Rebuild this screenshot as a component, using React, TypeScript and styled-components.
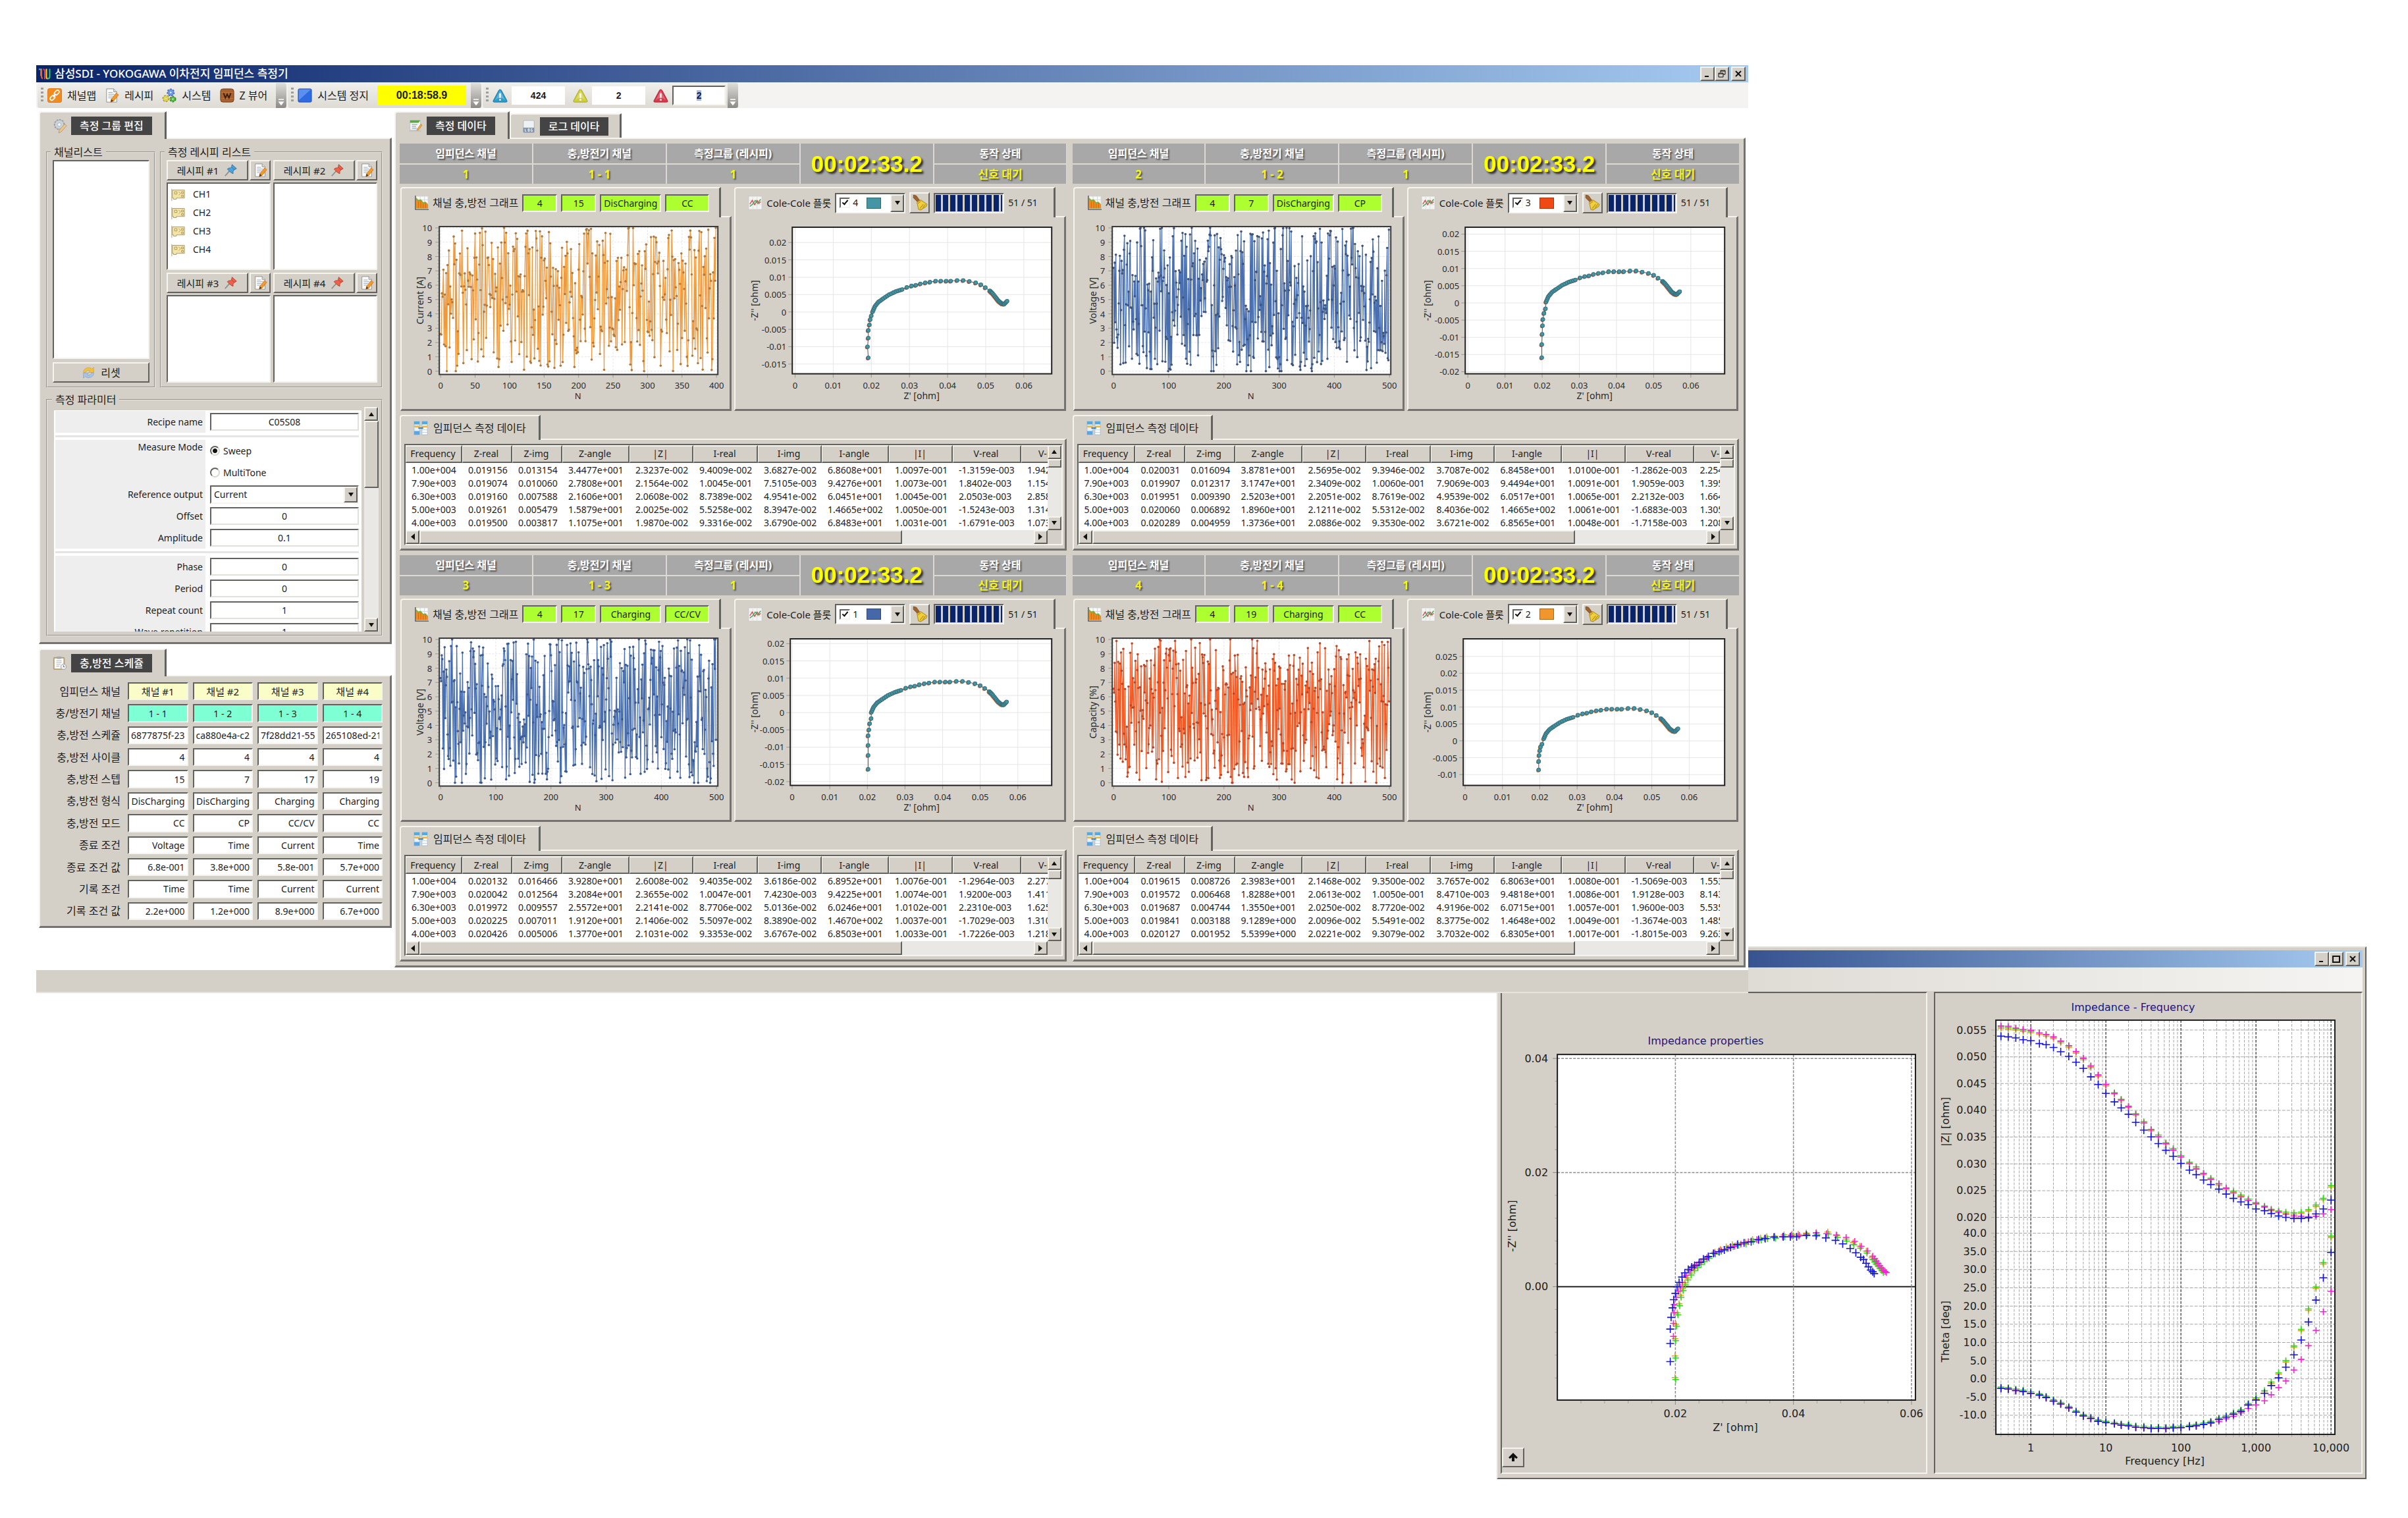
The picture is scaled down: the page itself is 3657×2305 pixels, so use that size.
import React from 'react';
import styled, { createGlobalStyle, css } from 'styled-components';

const FACE = '#d4d0c8';
const LIGHT = '#f6f4ee';
const SHADE = '#62625f';
const UI = '"Noto Sans", "Noto Sans CJK KR", sans-serif';
const WIDE = '"DejaVu Sans", sans-serif';
const BOLD = '"Liberation Sans", Arial, sans-serif';

const Global = createGlobalStyle`
  *, *::before, *::after { box-sizing: border-box; }
  body { margin: 0; background: #fff; color: #1c1c1c; font: 14px/20px ${UI}; }
  button, input, select { font: inherit; color: inherit; margin: 0; padding: 0; border-radius: 0; }
`;

const raised = css`
  background: ${FACE};
  border: 2px solid;
  border-color: ${LIGHT} ${SHADE} ${SHADE} ${LIGHT};
`;
const sunken = css`
  border: 2px solid;
  border-color: ${SHADE} ${LIGHT} ${LIGHT} ${SHADE};
`;

/* ---------- windows ---------- */

const Desktop = styled.main`
  position: relative;
  min-height: 100vh;
  min-width: 3000px;
  background: #fff;
`;
const MainWindow = styled.section`
  position: absolute;
  z-index: 2;
  top: 99px;
  left: 55px;
  right: 1002px;
  background: #fff;
`;
const ViewerWindow = styled.section`
  position: absolute;
  z-index: 1;
  top: 1437px;
  left: 2273px;
  right: 63px;
  padding: 4px;
  background: ${FACE};
  border: 2px solid;
  border-color: #e4e1da ${SHADE} ${SHADE} #e4e1da;
`;
const TitleBar = styled.header`
  display: flex;
  align-items: center;
  height: 26px;
  padding: 0 4px 0 3px;
  background: linear-gradient(90deg, #0a246a, #a6caf0);
  color: #fff;
`;
const ViewerBar = styled(TitleBar)`
  justify-content: flex-end;
`;
const Title = styled.h1`
  flex: 1;
  margin: 0 0 0 5px;
  font-size: 17px;
  font-weight: 500;
  line-height: 24px;
`;
const CaptionButton = styled.button<{ $apart?: boolean }>`
  ${raised}
  display: grid;
  place-items: center;
  width: 22px;
  height: 22px;
  margin-left: ${p => (p.$apart ? 3 : 0)}px;
  svg { width: 14px; height: 14px; }
`;
const MenuBand = styled.div`
  height: 36px;
  background: linear-gradient(90deg, #d6d2ca, #f5f4f2);
`;
const StatusBar = styled.footer`
  height: 35px;
  margin-top: 4px;
  background: ${FACE};
  border-bottom: 2px solid #e6e3dc;
`;

/* ---------- toolbar ---------- */

const Toolbar = styled.div`
  display: flex;
  gap: 2px;
  height: 39px;
  padding: 1px 2px 0;
  background: #f4f3f1;
`;
const Strip = styled.div`
  display: flex;
  align-items: center;
  padding-left: 5px;
  border-radius: 4px 0 0 4px;
  background: linear-gradient(#f1efec, #dedbd4);
`;
const Grip = styled.span`
  width: 4px;
  height: 24px;
  margin-right: 6px;
  background: repeating-linear-gradient(#a19e98 0 3px, transparent 3px 6px);
`;
const ToolButton = styled.button`
  display: flex;
  align-items: center;
  gap: 8px;
  margin-right: 13px;
  border: 0;
  background: none;
  font-size: 16px;
  line-height: 20px;
  svg { width: 22px; height: 22px; }
`;
const Overflow = styled.button`
  align-self: stretch;
  display: flex;
  align-items: flex-end;
  justify-content: center;
  width: 16px;
  border: 0;
  border-radius: 0 4px 4px 0;
  background: linear-gradient(#e0ded9, #8b8a87);
  svg { width: 12px; height: 12px; margin-bottom: 3px; }
`;
const Elapsed = styled.output`
  width: 135px;
  margin-right: 7px;
  background: #ffff00;
  font: bold 16px/30px ${BOLD};
  text-align: center;
`;
const Counter = styled.label`
  display: flex;
  align-items: center;
  gap: 6px;
  margin-right: 12px;
  svg { width: 23px; height: 23px; }
  &:last-of-type { margin-right: 3px; }
`;
const CounterBox = styled.input`
  width: 81px;
  height: 28px;
  border: 0;
  background: #fff;
  font: bold 14px/24px ${BOLD};
  text-align: center;
`;
const ActiveBox = styled.output`
  ${sunken}
  width: 81px;
  height: 30px;
  background: #fff;
  font: bold 14px/26px ${BOLD};
  text-align: center;
  mark { background: #a9bbdc; color: #10204c; }
`;

/* ---------- tab frames ---------- */

const Workspace = styled.div`
  display: grid;
  grid-template-columns: 536px 1fr;
  gap: 4px;
  align-items: start;
  padding: 5px 4px 0;
`;
const Column = styled.div`
  display: flex;
  flex-direction: column;
  gap: 7px;
  min-width: 0;
`;
const Frame = styled.section`
  display: flex;
  flex-direction: column;
  min-width: 0;
`;
const TabStrip = styled.div`
  display: flex;
  align-items: flex-end;
`;
const Tab = styled.div<{ $kind?: 'page' | 'tools' | 'small' | 'rear' }>`
  position: relative;
  z-index: ${p => (p.$kind === 'rear' ? 0 : 1)};
  display: flex;
  align-items: center;
  gap: ${p => (p.$kind === 'small' ? 8 : 6)}px;
  height: ${p => (p.$kind === 'small' ? 38 : p.$kind === 'tools' ? 46 : p.$kind === 'rear' ? 37 : 42)}px;
  margin-bottom: ${p => (p.$kind === 'rear' ? 0 : -2)}px;
  padding: 0 19px;
  ${p => p.$kind === 'tools' && 'flex: 1; margin-right: 16px; padding-right: 8px;'}
  ${p => p.$kind === 'rear' && 'padding: 0 17px 0 16px;'}
  background: ${FACE};
  border: solid;
  border-width: 2px 3px 0 2px;
  border-color: ${LIGHT} ${SHADE} ${FACE} ${LIGHT};
  border-top-left-radius: 4px;
  font-size: 16px;
  svg { flex: none; width: 22px; height: 22px; }
`;
const TabBody = styled.div<{ $pad: string }>`
  flex: 1;
  min-width: 0;
  padding: ${p => p.$pad};
  background: ${FACE};
  border: solid;
  border-width: 2px 3px 3px 2px;
  border-color: ${LIGHT} #74736f #74736f ${LIGHT};
`;
const DarkLabel = styled.h2`
  margin: 0;
  padding: 0 13px;
  background: #444;
  color: #fff;
  font-size: 16px;
  font-weight: 500;
  line-height: 28px;
  white-space: nowrap;
`;
const TabText = styled.h3<{ $size?: number }>`
  margin: 0;
  font-size: ${p => p.$size || 16}px;
  font-weight: 400;
  line-height: 20px;
  white-space: nowrap;
`;

/* ---------- group editor ---------- */

const GroupRow = styled.div`
  display: grid;
  grid-template-columns: 166fr 338fr;
  gap: 7px;
  height: 367px;
  margin-bottom: 9px;
`;
const Group = styled.fieldset<{ $pad: string }>`
  display: flex;
  flex-direction: column;
  min-width: 0;
  margin: 0;
  padding: ${p => p.$pad};
  border: 2px groove #e9e6df;
  legend { padding: 0 5px; margin-left: -3px; font-size: 16px; line-height: 18px; }
`;
const ListBox = styled.ul`
  ${sunken}
  flex: 1;
  margin: 0;
  padding: 2px 5px;
  background: #fff;
  list-style: none;
`;
const Channel = styled.li`
  display: flex;
  align-items: center;
  gap: 12px;
  height: 28px;
  svg { width: 21px; height: 21px; }
`;
const PushButton = styled.button`
  ${raised}
  display: flex;
  align-items: center;
  justify-content: center;
  gap: 8px;
  width: 100%;
  height: 31px;
  font-size: 15px;
  white-space: nowrap;
  svg { flex: none; width: 21px; height: 21px; }
`;
const ResetButton = styled(PushButton)`
  margin-top: 5px;
  font-size: 16px;
`;
const RecipeGrid = styled.div`
  flex: 1;
  display: grid;
  grid-template-columns: 1fr 1fr;
  grid-auto-rows: minmax(0, 1fr);
  gap: 4px;
`;
const RecipeCell = styled.div`
  display: grid;
  grid-template-columns: 1fr 32px;
  grid-template-rows: 31px minmax(0, 1fr);
  gap: 3px 2px;
  ul { grid-column: span 2; }
`;

/* ---------- parameter form ---------- */

const ParamPane = styled.div`
  display: grid;
  grid-template-columns: 1fr 22px;
  gap: 4px;
  height: 341px;
`;
const FormView = styled.div`
  height: 336px;
  margin-top: 5px;
  padding: 1px 4px 0 2px;
  overflow: hidden;
  background: #fff;
`;
const FormGroup = styled.div`
  display: grid;
  grid-template-columns: 228px 1fr;
  column-gap: 7px;
`;
const Rule = styled.hr`
  height: 3px;
  margin: 4px 0;
  border: 0;
  background: #e4e4e4;
`;
const FormLabel = styled.label<{ $tall?: boolean }>`
  padding-right: 4px;
  background: #eee;
  text-align: right;
  line-height: ${p => (p.$tall ? 22 : 33)}px;
  height: ${p => (p.$tall ? 66 : 33)}px;
`;
const FieldSlot = styled.div`
  display: flex;
  flex-direction: column;
  justify-content: center;
`;
const TextField = styled.input<{ $align?: string; $bg?: string; $size?: number }>`
  ${sunken}
  border-color: ${SHADE} #e2e0da #e2e0da ${SHADE};
  min-width: 0;
  width: 100%;
  height: 27px;
  padding: 0 3px;
  background: ${p => p.$bg || '#fff'};
  font-size: ${p => p.$size || 14}px;
  line-height: 20px;
  text-align: ${p => p.$align || 'center'};
`;
const RadioLine = styled.label`
  display: flex;
  align-items: center;
  gap: 5px;
  height: 33px;
`;
const Radio = styled.input`
  appearance: none;
  width: 15px;
  height: 15px;
  border: 2px solid;
  border-color: ${SHADE} #d8d6d0 #d8d6d0 ${SHADE};
  border-radius: 50%;
  background: #fff;
  &:checked { background: radial-gradient(circle, #111 0 3px, #fff 4px); }
`;
const SelectBox = styled.div`
  ${sunken}
  display: flex;
  height: 28px;
  background: #fff;
  select { flex: 1; appearance: none; border: 0; padding: 0 4px; background: transparent; outline: 0; }
`;
const ArrowCap = styled.span`
  ${raised}
  display: grid;
  place-items: center;
  width: 21px;
  svg { width: 12px; height: 12px; }
`;

/* ---------- scroll bars ---------- */

const Scroll = styled.div<{ $row?: boolean }>`
  display: flex;
  flex-direction: ${p => (p.$row ? 'row' : 'column')};
  min-width: 0;
  background: #e9e8e4;
`;
const ScrollButton = styled.button`
  ${raised}
  flex: none;
  display: grid;
  place-items: center;
  width: 21px;
  height: 21px;
  svg { width: 12px; height: 12px; }
`;
const Thumb = styled.span<{ $grow: number }>`
  ${raised}
  flex: ${p => p.$grow} 0 0;
`;
const Track = styled.span<{ $grow: number }>`
  flex: ${p => p.$grow} 0 0;
`;

/* ---------- schedule ---------- */

const ScheduleGrid = styled.div`
  display: grid;
  grid-template-columns: 111px repeat(4, 1fr);
  grid-auto-rows: minmax(0, 1fr);
  gap: 6px 7px;
  height: 361px;
`;
const ScheduleLabel = styled.span`
  align-self: center;
  padding-right: 4px;
  font-size: 16px;
  line-height: 20px;
  text-align: right;
  white-space: nowrap;
`;
const ScheduleField = styled(TextField)`
  height: 100%;
  border-color: ${SHADE} ${LIGHT} ${LIGHT} ${SHADE};
`;

/* ---------- measurement quadrants ---------- */

const QuadGrid = styled.div`
  display: grid;
  grid-template-columns: 1fr 1fr;
  gap: 7px 9px;
`;
const Quad = styled.article`
  display: flex;
  flex-direction: column;
  min-width: 0;
`;
const Banner = styled.div`
  display: grid;
  grid-template-columns: repeat(5, 1fr);
  grid-template-rows: 30px 29px;
  grid-auto-flow: column;
  gap: 2px;
  background: #dcd9d2;
`;
const BannerCell = styled.div<{ $kind?: 'value' | 'time' }>`
  display: flex;
  align-items: center;
  justify-content: center;
  background: #a8a8a8;
  color: ${p => (p.$kind ? '#f4f41a' : '#fff')};
  font-size: ${p => (p.$kind === 'value' ? 17 : 16)}px;
  font-weight: 700;
  line-height: 20px;
  text-shadow: 2px 2px 2px rgba(50, 50, 50, 0.75);
  ${p => p.$kind === 'time' && css`
    grid-row: span 2;
    color: #ffff00;
    font-family: ${BOLD};
    font-size: 35px;
    text-shadow: 3px 3px 3px rgba(30, 30, 30, 0.9);
  `}
`;
const GraphRow = styled.div`
  display: grid;
  grid-template-columns: 1fr 1fr;
  gap: 4px;
  margin: 5px 1px 6px;
`;
const Drawing = styled.svg`
  display: block;
  width: 100%;
  height: auto;
`;
const GreenField = styled(TextField)<{ $w: number }>`
  flex: none;
  width: ${p => p.$w}px;
  border-color: ${SHADE} ${LIGHT} ${LIGHT} ${SHADE};
`;
const Combo = styled.div`
  ${sunken}
  display: flex;
  align-items: center;
  width: 107px;
  height: 31px;
  padding-left: 5px;
  background: #fff;
  label { display: flex; align-items: center; gap: 4px; flex: 1; font-size: 14px; }
`;
const Check = styled.input`
  ${sunken}
  appearance: none;
  width: 16px;
  height: 16px;
  background: #fff;
  &:checked::after {
    content: '';
    display: block;
    width: 5px;
    height: 9px;
    margin: 0 0 0 4px;
    border: solid #111;
    border-width: 0 2px 2px 0;
    rotate: 40deg;
  }
`;
const Swatch = styled.span<{ $c: string }>`
  width: 22px;
  height: 17px;
  margin-right: 14px;
  border: 1px solid rgba(0, 0, 0, 0.3);
  background: ${p => p.$c};
`;
const ComboArrow = styled(ScrollButton)`
  height: 27px;
`;
const BroomButton = styled.button`
  ${raised}
  flex: none;
  display: grid;
  place-items: center;
  width: 31px;
  height: 32px;
  && svg { width: 26px; height: 26px; }
`;
const Progress = styled.div`
  ${sunken}
  width: 107px;
  height: 31px;
  padding: 1px;
  &::before {
    content: '';
    display: block;
    height: 100%;
    background: repeating-linear-gradient(90deg, #0a246a 0 8px, ${FACE} 8px 11px);
  }
`;
const Small = styled.span`
  font-size: 14px;
  white-space: nowrap;
`;
const SheetFrame = styled.div`
  ${sunken}
  display: grid;
  grid-template-columns: minmax(0, 1fr) 21px;
  grid-template-rows: auto 21px;
  background: #fff;
`;
const SheetClip = styled.div`
  overflow: hidden;
`;
const Sheet = styled.table`
  width: 1028px;
  table-layout: fixed;
  border-collapse: separate;
  border-spacing: 0;
  white-space: nowrap;
  th {
    height: 27px;
    padding: 0 2px 0 0;
    background: ${FACE};
    border: 2px solid;
    border-color: ${LIGHT} ${SHADE} ${SHADE} ${LIGHT};
    border-left-width: 1px;
    font-weight: 400;
    line-height: 20px;
  }
  td { height: 20px; padding: 0 0 0 9px; line-height: 20px; }
  tbody tr:first-child td { height: 21px; padding-top: 1px; }
  tbody tr:last-child td { height: 21px; padding-bottom: 1px; }
`;
const Corner = styled.span`
  background: ${FACE};
`;

/* ---------- viewer ---------- */

const ViewerGrid = styled.div`
  display: grid;
  grid-template-columns: 647fr 650fr;
  gap: 10px;
  padding: 1px 0 2px;
`;
const ViewerPane = styled.div`
  ${sunken}
  position: relative;
  background: ${FACE};
`;
const PaneButton = styled.button`
  ${raised}
  position: absolute;
  left: 0;
  bottom: 8px;
  display: grid;
  place-items: center;
  width: 34px;
  height: 30px;
  svg { width: 18px; height: 18px; }
`;

/* ---------- icons ---------- */

const Icon = ({ children }: { children: React.ReactNode }) => (
  <svg viewBox="0 0 24 24" fill="none" aria-hidden="true">{children}</svg>
);
const LogoIcon = () => (
  <svg viewBox="0 0 24 24" width="20" height="20" fill="none" strokeWidth="2.4" aria-hidden="true">
    <path d="M1 4h4v12" stroke="#2fb4f0" />
    <path d="M6 3v13q0 4 2 5" stroke="#f0622a" />
    <path d="M9 4q3 0 3 4v14" stroke="#f23b3b" />
    <path d="M15 3v14q0 4 2 4" stroke="#f6dc35" />
    <path d="M17 21q4 0 4-4V3" stroke="#35c76a" />
  </svg>
);
const ChainIcon = () => (
  <Icon>
    <rect x="0.5" y="0.5" width="23" height="23" rx="3" fill="#f28a1d" stroke="#d97512" />
    <g stroke="#fff" strokeWidth="1.8">
      <rect x="11" y="4.5" width="9" height="5.5" rx="2.7" transform="rotate(-45 15.5 7.2)" />
      <rect x="4" y="13" width="9" height="5.5" rx="2.7" transform="rotate(-45 8.5 15.8)" />
      <path d="M9.5 14.5l5-5" />
    </g>
  </Icon>
);
const DocPencilIcon = () => (
  <Icon>
    <path d="M3 1h12l5 5v17H3z" fill="#fbfbfa" stroke="#8c8c8c" />
    <path d="M15 1v5h5" fill="#ddd" stroke="#8c8c8c" />
    <path d="M6 7h7M6 10h10M6 13h8M6 16h6" stroke="#8fa0b5" />
    <path d="M19 8l4 3-8 10-5 2 1-5z" fill="#f39a2a" stroke="#c26a12" strokeWidth="0.8" />
    <path d="M10 23l1-5 3.5 3z" fill="#5a3b1c" />
  </Icon>
);
const Cog = ({ x, y, r, c, d }: { x: number; y: number; r: number; c: string; d: string }) => (
  <g>
    <circle cx={x} cy={y} r={r} stroke={d} strokeWidth="3" strokeDasharray="2.4 2" fill={c} />
    <circle cx={x} cy={y} r={r} fill={c} stroke={d} strokeWidth="0.6" />
    <circle cx={x} cy={y} r={r / 2.6} fill="#f3f3f3" stroke={d} strokeWidth="0.6" />
  </g>
);
const GearsIcon = () => (
  <Icon>
    <Cog x={14.5} y={7} r={5} c="#6f9ae6" d="#3e68b8" />
    <Cog x={6.5} y={17} r={4.4} c="#e6dc4a" d="#a89b22" />
    <Cog x={18} y={18} r={4} c="#5dbb4a" d="#378a2a" />
  </Icon>
);
const WoodIcon = () => (
  <Icon>
    <rect x="1" y="1" width="22" height="22" rx="4" fill="#a9622f" stroke="#6e3a16" />
    <path d="M2 7h20M2 17h20" stroke="#c07a42" />
    <path d="M6 8l3 8 3-6 3 6 3-8" stroke="#3a1c08" strokeWidth="2" />
  </Icon>
);
const BlueIcon = () => (
  <Icon>
    <rect x="1" y="1" width="22" height="22" rx="2" fill="#2f6be0" stroke="#1c4cae" />
    <path d="M2 2h20L2 20z" fill="#6ea0f6" opacity="0.7" />
  </Icon>
);
const AlertIcon = ({ c, d }: { c: string; d: string }) => (
  <Icon>
    <path d="M12 2q1.4 0 2 1.2L23 20q.4 2-1.6 2H2.6Q.6 22 1 20l9-16.8Q10.6 2 12 2z" fill={c} stroke={d} />
    <path d="M12 4L4 19q8-7 16 0z" fill="#fff" opacity="0.25" />
    <path d="M12 8v7M12 17v2.5" stroke="#fff" strokeWidth="2.5" />
  </Icon>
);
const GearPencilIcon = () => (
  <Icon>
    <Cog x={11} y={10} r={7.5} c="#ccd2da" d="#8d949e" />
    <path d="M20 9l3 3-9 10-4 2 1-5z" fill="#ecc68a" stroke="#a98a5c" strokeWidth="0.8" />
  </Icon>
);
const NotesIcon = () => (
  <Icon>
    <path d="M3 3h17v16H3z" fill="#f7f8f8" stroke="#b9c0c6" />
    <path d="M3 3h17l-3 4H3z" fill="#5aa83e" />
    <path d="M6 10h9M6 13h7M6 16h8" stroke="#8fa3bb" strokeWidth="1.5" />
    <path d="M21 9l2 2-6 8-3 1 1-3z" fill="#f2a73a" stroke="#bd7a1c" strokeWidth="0.7" />
    <path d="M2 21h20" stroke="#c2c6ca" strokeWidth="2" />
  </Icon>
);
const LogIcon = () => (
  <Icon>
    <rect x="3" y="2" width="18" height="20" rx="2" fill="#eef1f4" stroke="#a8b0b8" />
    <path d="M3 14h18v8H3z" fill="#7f93a8" />
    <path d="M6 16v4h2M11 16h2v4h-2zM18 16h-2v4h2v-2" stroke="#fff" />
  </Icon>
);
const ClipboardIcon = () => (
  <Icon>
    <rect x="2" y="3" width="17" height="19" rx="1" fill="#fff" stroke="#b99a6c" strokeWidth="2" />
    <rect x="7" y="1" width="7" height="4" fill="#a8a8a8" />
    <path d="M6 8h9M6 11h9M6 14h7M6 17h5" stroke="#a3a9b0" />
    <circle cx="18" cy="18" r="4.5" fill="#eceff2" stroke="#9a9a9a" />
    <path d="M18 15.5V18h2" stroke="#666" />
  </Icon>
);
const PinIcon = ({ c, d }: { c: string; d: string }) => (
  <Icon>
    <path d="M10 13l-8 9" stroke="#8d8d8d" strokeWidth="2" />
    <path d="M14 2l8 7-3 1-3 4 0 4-4-2-6-6 3-2h3l3-3z" fill={c} stroke={d} />
    <path d="M14 3l-1 3 5 5 3-1" stroke={d} fill="none" />
  </Icon>
);
const CardIcon = () => (
  <Icon>
    <path d="M1 2v21M2 4h21v14H9v2H4v-2H2z" fill="#f4e3a4" stroke="#9d9270" />
    <path d="M6 7h4v4H6zM13 7l3 3-3 3M18 7h3v3h-3zM18 13h3v3h-3z" stroke="#a08a44" fill="#fbf3cf" />
  </Icon>
);
const ResetIcon = () => (
  <Icon>
    <path d="M3 12a9 9 0 0 1 15-6l3-3v9h-9l3-3a5.5 5.5 0 0 0-8 3z" fill="#f3c141" stroke="#cf982a" strokeWidth="0.7" />
    <path d="M21 13a9 9 0 0 1-15 6l-3 3v-9h9l-3 3a5.5 5.5 0 0 0 8-3z" fill="#a9c3e4" stroke="#7d9ac0" strokeWidth="0.7" />
  </Icon>
);
const AreaIcon = () => (
  <Icon>
    <path d="M3 1h20v20H3z" fill="#fafafa" stroke="#cfcfcf" />
    <path d="M3 7h20M3 13h20M10 1v20M17 1v20" stroke="#cfd5da" />
    <path d="M3 21V3l4 4 4-1 4 5 4-1 4 5v6z" fill="#7fae3c" />
    <path d="M3 21V6l4 4 4-2 4 6 4-2 4 4v5z" fill="#ee8a1f" />
    <path d="M7 10v11M11 8v13M15 14v7M19 12v9" stroke="#c96a10" />
    <path d="M2 0v23h22" stroke="#565656" strokeWidth="1.5" />
  </Icon>
);
const LineIcon = () => (
  <Icon>
    <rect x="1" y="1" width="22" height="22" fill="#f4f4f3" stroke="#c9c9c9" />
    <path d="M2 8h20M2 15h20M8 2v20M15 2v20" stroke="#dcdcdc" />
    <path d="M3 14l4-6 4 7 4-7 3 5 3-3" stroke="#d64a4a" strokeWidth="1.5" />
    <path d="M3 18l5-4 4-6 4 5 5-7" stroke="#4aa25a" strokeWidth="1.5" />
  </Icon>
);
const LinkTableIcon = () => (
  <Icon>
    <rect x="1" y="1" width="9" height="22" fill="#e9f2fb" stroke="#9fbfdf" />
    <path d="M1 1h9v5H1zM1 17h9v6H1z" fill="#58a8e0" />
    <path d="M1 8h9v3H1z" fill="#e8b84e" />
    <rect x="14" y="1" width="9" height="22" fill="#fff" stroke="#9fbfdf" />
    <path d="M14 1h9v5h-9z" fill="#58a8e0" />
    <path d="M14 8h9v3h-9z" fill="#e8b84e" />
    <path d="M14 15h9M14 19h9" stroke="#b9c7d4" />
    <path d="M8 11h6v-1l3 2-3 2v-1H8z" fill="#3c86c6" />
  </Icon>
);
const BroomIcon = () => (
  <Icon>
    <path d="M3 1l4 1 5 7-3 2-6-6z" fill="#a0622c" stroke="#6e3f18" strokeWidth="0.7" />
    <path d="M8 11l5-3 9 6-1 3-8 5-3-1z" fill="#f0cf3a" stroke="#b3901c" />
    <path d="M13 10l-4 3M12 20l5-6M16 19l4-5" stroke="#b3901c" />
  </Icon>
);
const ARROWS = { up: 'M6 3l4 6H2z', down: 'M6 9L2 3h8z', left: 'M3 6l6-5v10z', right: 'M9 6L3 1v10z' };
const Arrow = ({ to }: { to: keyof typeof ARROWS }) => (
  <svg viewBox="0 0 12 12" aria-hidden="true"><path d={ARROWS[to]} fill="#111" /></svg>
);
const MoreMark = () => (
  <svg viewBox="0 0 12 12" aria-hidden="true"><path d="M2 2h8M3 6h6l-3 4z" stroke="#fff" strokeWidth="1.5" fill="#fff" /></svg>
);
const CaptionMark = ({ d, w = 2 }: { d: string; w?: number }) => (
  <svg viewBox="0 0 14 14" fill="none" aria-hidden="true"><path d={d} stroke="#111" strokeWidth={w} /></svg>
);

/* ---------- charts ---------- */

const lerp = (v: number, a: number, b: number, c: number, d: number) => c + ((v - a) / (b - a)) * (d - c);

function noise(seed: number, count: number) {
  let s = seed;
  return Array.from({ length: count }, () => {
    s = (s * 1664525 + 1013904223) % 4294967296;
    return Math.min(10, Math.max(0, (s / 4294967296) * 10.3 - 0.15));
  });
}

type Trend = { seed: number; count: number; max: number; step: number; unit: string; line: string; dot: string };

function TrendChart({ seed, count, max, step, unit, line, dot }: Trend) {
  const L = 57, R = 479, T = 14, B = 238;
  const y = (v: number) => lerp(v, 0, 10, 233, 16);
  const x = (v: number) => lerp(v, 0, max, 59, 477);
  const pts = noise(seed, count).map((v, i) => [x((i / count) * max), y(v)]);
  const marks = Array.from({ length: max / step + 1 }, (_, i) => i * step);
  return (
    <Drawing viewBox="0 0 497 290" fontFamily={UI} fontSize="13" fill="#2a2a2a" role="img" aria-label={unit}>
      <rect x={L} y={T} width={R - L} height={B - T} fill="#fff" />
      {Array.from({ length: 11 }, (_, i) => (
        <g key={i}>
          <path d={`M${L} ${y(i)}H${R}`} stroke="#e6e6e6" strokeDasharray="3 2" />
          <path d={`M${L - 6} ${y(i)}H${L}`} stroke="#9a9893" />
          {i < 10 && <path d={`M${L - 3} ${y(i + 0.25)}h3M${L - 3} ${y(i + 0.5)}h3M${L - 3} ${y(i + 0.75)}h3`} stroke="#aaa8a2" />}
          <text x="46" y={y(i)} textAnchor="end" dominantBaseline="central">{i}</text>
        </g>
      ))}
      {marks.map(v => (
        <g key={v}>
          <path d={`M${x(v)} ${T}V${B}`} stroke="#e6e6e6" strokeDasharray="3 2" />
          <path d={`M${x(v)} ${B}v5`} stroke="#9a9893" />
          <text x={x(v)} y="254" textAnchor="middle" dominantBaseline="central">{v}</text>
        </g>
      ))}
      <path d={'M' + pts.map(p => p[0].toFixed(1) + ' ' + p[1].toFixed(1)).join('L')} fill="none" stroke={line} strokeWidth="1.3" strokeLinejoin="bevel" />
      {pts.map((p, i) => <circle key={i} cx={p[0]} cy={p[1]} r="1.8" fill={dot} />)}
      <rect x={L} y={T} width={R - L} height={B - T} fill="none" stroke="#3a3a3a" strokeWidth="2" />
      <text x="267" y="270" textAnchor="middle" dominantBaseline="central">N</text>
      <text transform="translate(27 126) rotate(-90)" textAnchor="middle" dominantBaseline="central" fontSize="14">{unit}</text>
    </Drawing>
  );
}

/* impedance arc shared by all cells, in milliohm */
const ARC: number[][] = [
  [20.35, 0.1], [20.96, 1.65], [21.89, 2.9], [23.13, 3.86], [24.67, 5], [26.41, 5.9], [28.08, 6.5], [29.31, 7.1],
  [30.55, 7.5], [31.66, 7.7], [32.84, 8.1], [34.14, 8.4], [35.37, 8.6], [36.86, 8.9], [38.22, 8.9], [39.64, 8.9],
  [40.82, 8.9], [42.49, 9.1], [44.09, 9.1], [45.7, 8.8], [47.37, 8.4], [48.73, 7.85], [49.91, 7.03], [51.08, 6.1],
  [51.76, 5.4], [52.63, 4.2], [53.43, 3.1], [54.24, 2.4], [54.86, 2.28], [55.6, 3.1],
];

type Cole = { left: number; x: [number, number]; y: [number, number]; labels: number[]; lead: number[][]; stretch: number; lift: number; under: string };

function ColeChart({ left, x: xr, y: yr, labels, lead, stretch, lift, under }: Cole) {
  const R = 479, T = 15, B = 237;
  const x = (v: number) => lerp(v, xr[0], xr[1], left, R);
  const y = (v: number) => lerp(v, yr[0], yr[1], B, T);
  const arc = ARC.map(([a, b]) => [a * stretch + (stretch > 1 ? 0.3 : 0), b + lift]);
  const dense: number[][] = [];
  arc.forEach((p, i) => {
    const q = arc[i + 1];
    dense.push(p);
    if (q && (i < 6 || i > 22)) [1, 2].forEach(k => dense.push([p[0] + ((q[0] - p[0]) * k) / 3, p[1] + ((q[1] - p[1]) * k) / 3]));
  });
  const pts = [...lead, ...dense].map(([a, b]) => [x(a), y(b)]);
  return (
    <Drawing viewBox="0 0 497 290" fontFamily={UI} fontSize="13" fill="#2a2a2a" role="img" aria-label="Cole-Cole">
      <rect x={left} y={T} width={R - left} height={B - T} fill="#fff" />
      {labels.map(v => (
        <g key={v}>
          <path d={`M${left} ${y(v)}H${R}`} stroke="#e6e6e6" />
          <path d={`M${left - 6} ${y(v)}H${left}`} stroke="#9a9893" />
          <text x={left - 9} y={y(v)} textAnchor="end" dominantBaseline="central">{v / 1000}</text>
        </g>
      ))}
      {[0, 10, 20, 30, 40, 50, 60].map(v => (
        <g key={v}>
          <path d={`M${x(v)} ${T}V${B}`} stroke="#e6e6e6" />
          <path d={`M${x(v)} ${B}v6`} stroke="#9a9893" />
          <text x={x(v)} y="254" textAnchor="middle" dominantBaseline="central">{v / 1000}</text>
        </g>
      ))}
      {pts.map((p, i) => <circle key={i} cx={p[0] - 1} cy={p[1] + 1} r="2.8" fill={under} />)}
      <path d={'M' + pts.map(p => p.join(' ')).join('L')} fill="none" stroke="#555" strokeWidth="1" />
      {pts.map((p, i) => <circle key={i} cx={p[0]} cy={p[1]} r="2.8" fill="#4595a4" stroke="#376f7b" strokeWidth="1" />)}
      <rect x={left} y={T} width={R - left} height={B - T} fill="none" stroke="#222" strokeWidth="2" />
      <text x="282" y="270" textAnchor="middle" dominantBaseline="central" fontSize="14">Z' [ohm]</text>
      <text transform="translate(28 126) rotate(-90)" textAnchor="middle" dominantBaseline="central" fontSize="14">-Z'' [ohm]</text>
    </Drawing>
  );
}

const INKS = { orange: '#f0a020', green: '#2fd81c', magenta: '#f026d2', blue: '#1414dc' };

function Crosses({ pts, ink, big }: { pts: number[][]; ink: string; big?: boolean }) {
  const h = big ? 6 : 5;
  return <path d={pts.map(([a, b]) => `M${(a - h).toFixed(1)} ${b.toFixed(1)}h${2 * h}M${a.toFixed(1)} ${(b - h).toFixed(1)}v${2 * h}`).join('')} stroke={ink} strokeWidth="1.6" fill="none" />;
}

/* sweep traces: x in 1/20700 ohm, y in 1/16100 ohm, counted from the 0.02 / 0.00 crossing */
const SWEEP: Record<string, number[][]> = {
  blue: [[-18, -212], [-18, -161], [-18, -120], [-15, -87], [-10, -60], [-6, -37], [0, -19], [6, -1], [13, 12], [23, 27], [33, 39], [45, 49], [57, 55], [67, 60], [83, 68], [98, 78], [115, 85], [133, 94], [153, 99], [171, 104], [193, 111], [217, 119], [240, 124], [265, 127], [291, 133], [314, 136], [345, 140], [377, 141], [402, 141], [424, 141], [458, 145], [492, 144], [526, 138], [560, 131], [585, 121], [611, 108], [631, 96], [648, 83], [658, 77], [667, 66], [675, 56], [683, 47], [690, 42], [695, 37]],
  green: [[1, -263], [1, -202], [1, -153], [4, -112], [9, -80], [15, -54], [20, -30], [27, -11], [35, 5], [44, 19], [55, 33], [67, 45], [78, 54], [90, 63], [102, 71], [118, 80], [140, 92], [160, 100], [180, 107], [202, 113], [221, 117], [247, 120], [272, 128], [300, 132], [322, 136], [350, 137], [382, 141], [410, 143], [432, 143], [460, 146], [495, 147], [535, 149], [567, 139], [599, 129], [624, 119], [647, 109], [670, 95], [690, 77], [697, 70], [702, 64], [709, 58], [715, 52], [721, 46], [727, 40]],
  magenta: [[-7, -141], [-7, -104], [-5, -74], [-5, -51], [3, -30], [11, -13], [18, 0], [25, 12], [38, 32], [50, 45], [62, 55], [74, 62], [90, 71], [110, 82], [137, 94], [160, 102], [184, 108], [207, 114], [229, 120], [255, 127], [285, 133], [312, 137], [345, 141], [375, 142], [405, 145], [433, 145], [458, 149], [492, 152], [529, 150], [563, 146], [597, 139], [627, 128], [650, 114], [672, 101], [690, 86], [697, 79], [703, 72], [709, 66], [715, 59], [721, 53], [727, 47], [733, 43], [738, 40]],
};

function PropertiesChart() {
  const L = 84, R = 627, T = 93, B = 617;
  const x = (v: number) => lerp(v, 20, 40, 263, 442);
  const y = (v: number) => lerp(v, 0, 20, 445, 272);
  const place = (name: string, dx = 0, dy = 0) => SWEEP[name].map(([a, b]) => [263 + a / 2.306 + dx, 445 - b / 1.867 + dy]);
  return (
    <Drawing viewBox="0 0 643 727" fontFamily={WIDE} fontSize="16" fill="#1c1c1c" role="img" aria-label="Impedance properties">
      <text x="309" y="72" textAnchor="middle" dominantBaseline="central" fill="#1d1480">Impedance properties</text>
      <rect x={L} y={T} width={R - L} height={B - T} fill="#fff" />
      {[40, 20, 0].map(v => (
        <g key={v}>
          <path d={`M${L} ${y(v)}H${R}`} stroke={v ? '#8c8c8c' : '#222'} strokeDasharray={v ? '4 2' : undefined} strokeWidth={v ? 1.5 : 2} />
          <path d={`M${L - 7} ${y(v)}H${L}`} stroke="#8a8a86" />
          <text x="70" y={y(v)} textAnchor="end" dominantBaseline="central">{(v / 1000).toFixed(2)}</text>
        </g>
      ))}
      {[36, 32, 28, 24, 16, 12, 8, 4, -4, -8, -12, -16].map(v => <path key={v} d={`M${L - 4} ${y(v)}H${L}`} stroke="#a3a19b" />)}
      {[4, 8, 12, 16, 24, 28, 32, 36, 44, 48, 52, 56].map(v => <path key={v} d={`M${x(v)} ${B}v5`} stroke="#a3a19b" />)}
      {[20, 40, 60].map(v => (
        <g key={v}>
          <path d={`M${x(v)} ${T}V${B}`} stroke="#8c8c8c" strokeDasharray="4 2" strokeWidth="1.5" />
          <path d={`M${x(v)} ${B}v7`} stroke="#8a8a86" />
          <text x={x(v)} y="638" textAnchor="middle" dominantBaseline="central">{(v / 1000).toFixed(2)}</text>
        </g>
      ))}
      <rect x={L} y={T} width={R - L} height={B - T} fill="none" stroke="#1c1c1c" strokeWidth="2" />
      <Crosses pts={place('green', -1, -3)} ink={INKS.orange} />
      <Crosses pts={place('green')} ink={INKS.green} />
      <Crosses pts={place('magenta')} ink={INKS.magenta} />
      <Crosses pts={place('blue')} ink={INKS.blue} big />
      <text x="354" y="658" textAnchor="middle" dominantBaseline="central">Z' [ohm]</text>
      <text transform="translate(15 353) rotate(-90)" textAnchor="middle" dominantBaseline="central">-Z'' [ohm]</text>
    </Drawing>
  );
}

const FREQ = [-1, 0, 1, 2, 3].flatMap(d => [1.3, 1.6, 2, 2.5, 3.2, 4, 5, 6.3, 7.9, 10].map(m => m * 10 ** d)).slice(5);
const MAG_BLUE = [288, 290, 293, 298, 301, 309, 312, 320, 332, 345, 362, 379, 403, 425, 450, 474, 491, 509, 532, 554, 573, 592, 611, 628, 648, 667, 680, 695, 708, 721, 735, 747, 757, 765, 777, 782, 790, 797, 801, 804, 804, 802, 791, 777, 752];
const MAG_PINK = [259, 260, 265, 269, 271, 279, 283, 290, 302, 315, 331, 350, 372, 398, 425, 450, 468, 488, 509, 534, 553, 573, 592, 611, 630, 649, 664, 677, 693, 706, 719, 732, 743, 753, 762, 771, 780, 786, 792, 797, 798, 799, 798, 791, 779];
const MAG_GREEN = [262, 264, 267, 270, 274, 279, 284, 291, 303, 316, 332, 351, 373, 398, 425, 448, 467, 486, 508, 530, 552, 568, 590, 606, 626, 645, 658, 676, 690, 706, 717, 727, 738, 749, 759, 769, 778, 783, 786, 788, 786, 779, 766, 747, 711];
const ARG_BLUE = [1285, 1287, 1291, 1294, 1299, 1304, 1311, 1321, 1329, 1340, 1352, 1363, 1370, 1378, 1382, 1385, 1389, 1391, 1395, 1396, 1399, 1398, 1399, 1397, 1396, 1393, 1391, 1387, 1382, 1373, 1366, 1358, 1350, 1332, 1318, 1299, 1277, 1255, 1225, 1190, 1148, 1097, 1035, 972, 900];
const ARG_GREEN = [...ARG_BLUE.slice(0, 34).map(v => v - 4), 1312, 1291, 1267, 1241, 1207, 1165, 1118, 1060, 998, 929, 854];
const ARG_PINK = [...ARG_BLUE.slice(0, 28), 1384, 1379, 1371, 1364, 1354, 1342, 1332, 1320, 1303, 1283, 1264, 1233, 1203, 1164, 1121, 1068, 1010];

function FrequencyChart() {
  const L = 92, R = 606, T = 41, B = 669;
  const x = (f: number) => 145 + Math.log10(f) * 113.8;
  const z = (v: number) => lerp(v, 20, 55, 340, 56);
  const a = (v: number) => lerp(v, -10, 40, 640, 364);
  const place = (rows: number[], dy = 0) => rows.map((v, i) => [x(FREQ[i]), (v + dy) / 1.867 - 89]);
  const minor = [0.4, 0.5, 0.6, 0.7, 0.8, 0.9, ...[1, 10, 100, 1000].flatMap(d => [2, 3, 4, 5, 6, 7, 8, 9].map(m => m * d))];
  return (
    <Drawing viewBox="0 0 646 727" fontFamily={WIDE} fontSize="16" fill="#1c1c1c" role="img" aria-label="Impedance - Frequency">
      <text x="300" y="21" textAnchor="middle" dominantBaseline="central" fill="#1d1480">Impedance - Frequency</text>
      <rect x={L} y={T} width={R - L} height={B - T} fill="#fff" />
      {minor.map(f => <path key={f} d={`M${x(f)} ${T}V${B}M${x(f)} ${B}v4`} stroke="#a8a8a8" strokeDasharray="4 2" />)}
      {[55, 50, 45, 40, 35, 30, 25, 20].map(v => (
        <g key={v}>
          <path d={`M${L - 7} ${z(v)}H${R}`} stroke="#a8a8a8" strokeDasharray="5 2" />
          {v > 20 && [1, 2, 3, 4].map(k => <path key={k} d={`M${L - 4} ${z(v - k)}h4`} stroke="#a3a19b" />)}
          <text x="78" y={z(v)} textAnchor="end" dominantBaseline="central">{(v / 1000).toFixed(3)}</text>
        </g>
      ))}
      {[40, 35, 30, 25, 20, 15, 10, 5, 0, -5, -10].map(v => (
        <g key={v}>
          <path d={`M${L - 7} ${a(v)}H${R}`} stroke="#a8a8a8" strokeDasharray="5 2" />
          {[1, 2, 3, 4].map(k => <path key={k} d={`M${L - 4} ${a(v - k)}h4`} stroke="#a3a19b" />)}
          <text x="78" y={a(v)} textAnchor="end" dominantBaseline="central">{v.toFixed(1)}</text>
        </g>
      ))}
      {[1, 10, 100, 1000, 10000].map(f => (
        <g key={f}>
          <path d={`M${x(f)} ${T}V${B}`} stroke="#555" strokeDasharray="4 2" strokeWidth="1.5" />
          <text x={x(f)} y="689" textAnchor="middle" dominantBaseline="central">{f.toLocaleString('en-US')}</text>
        </g>
      ))}
      <rect x={L} y={T} width={R - L} height={B - T} fill="none" stroke="#1c1c1c" strokeWidth="2" />
      <Crosses pts={place(MAG_GREEN, 4)} ink={INKS.orange} />
      <Crosses pts={place(MAG_GREEN)} ink={INKS.green} />
      <Crosses pts={place(MAG_PINK)} ink={INKS.magenta} />
      <Crosses pts={place(MAG_BLUE)} ink={INKS.blue} big />
      <Crosses pts={place(ARG_GREEN, 4)} ink={INKS.orange} />
      <Crosses pts={place(ARG_GREEN)} ink={INKS.green} />
      <Crosses pts={place(ARG_PINK)} ink={INKS.magenta} />
      <Crosses pts={place(ARG_BLUE)} ink={INKS.blue} big />
      <text x="348" y="709" textAnchor="middle" dominantBaseline="central">Frequency [Hz]</text>
      <text transform="translate(15 195) rotate(-90)" textAnchor="middle" dominantBaseline="central">|Z| [ohm]</text>
      <text transform="translate(15 513) rotate(-90)" textAnchor="middle" dominantBaseline="central">Theta [deg]</text>
    </Drawing>
  );
}

/* ---------- data ---------- */

const HEADS = ['Frequency', 'Z-real', 'Z-img', 'Z-angle', '|Z|', 'I-real', 'I-img', 'I-angle', '|I|', 'V-real', 'V-img'];
const WIDTHS = [86, 76, 76, 102, 97, 98, 97, 102, 97, 104];
const FREQS = ['1.00e+004', '7.90e+003', '6.30e+003', '5.00e+003', '4.00e+003'];

type Cell = { id: number; fields: string[]; pick: string; color: string; trend: Trend; cole: Cole; rows: string[] };
const BLUE = '#4a6fae';

const CELLS: Cell[] = [
  {
    id: 1, fields: ['4', '15', 'DisCharging', 'CC'], pick: '4', color: '#4595a4',
    trend: { seed: 77, count: 400, max: 400, step: 50, unit: 'Current [A]', line: '#f09a3e', dot: '#b07a3c' },
    cole: {
      left: 86, x: [-0.74, 67.3], y: [-17.8, 24.4], labels: [20, 15, 10, 5, 0, -5, -10, -15], stretch: 1, lift: 0, under: '#c8512c',
      lead: [[19.2, -13.2], [19, -10], [19.2, -7.5], [19.2, -5.3], [19.5, -3.7], [19.7, -2.2], [20, -1.1]],
    },
    rows: [
      '0.019156 0.013154 3.4477e+001 2.3237e-002 9.4009e-002 3.6827e-002 6.8608e+001 1.0097e-001 -1.3159e-003 1.942',
      '0.019074 0.010060 2.7808e+001 2.1564e-002 1.0045e-001 7.5105e-003 9.4276e+001 1.0073e-001 1.8402e-003 1.154',
      '0.019160 0.007588 2.1606e+001 2.0608e-002 8.7389e-002 4.9541e-002 6.0451e+001 1.0045e-001 2.0503e-003 2.858',
      '0.019261 0.005479 1.5879e+001 2.0025e-002 5.5258e-002 8.3947e-002 1.4665e+002 1.0050e-001 -1.5243e-003 1.314',
      '0.019500 0.003817 1.1075e+001 1.9870e-002 9.3316e-002 3.6790e-002 6.8483e+001 1.0031e-001 -1.6791e-003 1.073',
    ],
  },
  {
    id: 2, fields: ['4', '7', 'DisCharging', 'CP'], pick: '3', color: '#f04a14',
    trend: { seed: 1234, count: 480, max: 500, step: 100, unit: 'Voltage [V]', line: BLUE, dot: '#3f5478' },
    cole: {
      left: 86, x: [-0.7, 69.1], y: [-20.6, 22], labels: [20, 15, 10, 5, 0, -5, -10, -15, -20], stretch: 1.02, lift: 0.2, under: '#c8512c',
      lead: [[19.9, -15.9], [19.9, -12.1], [20, -9.1], [20.1, -6.6], [20.2, -4.8], [20.5, -3], [20.9, -1.7]],
    },
    rows: [
      '0.020031 0.016094 3.8781e+001 2.5695e-002 9.3946e-002 3.7087e-002 6.8458e+001 1.0100e-001 -1.2862e-003 2.254',
      '0.019907 0.012317 3.1747e+001 2.3409e-002 1.0060e-001 7.9069e-003 9.4494e+001 1.0091e-001 1.9059e-003 1.395',
      '0.019951 0.009390 2.5203e+001 2.2051e-002 8.7619e-002 4.9539e-002 6.0517e+001 1.0065e-001 2.2132e-003 1.664',
      '0.020060 0.006892 1.8960e+001 2.1211e-002 5.5312e-002 8.4036e-002 1.4665e+002 1.0061e-001 -1.6883e-003 1.305',
      '0.020289 0.004959 1.3736e+001 2.0886e-002 9.3530e-002 3.6721e-002 6.8565e+001 1.0048e-001 -1.7158e-003 1.208',
    ],
  },
  {
    id: 3, fields: ['4', '17', 'Charging', 'CC/CV'], pick: '1', color: '#4668a8',
    trend: { seed: 9001, count: 480, max: 500, step: 100, unit: 'Voltage [V]', line: BLUE, dot: '#3c5a94' },
    cole: {
      left: 83, x: [-0.5, 69], y: [-21.1, 21.4], labels: [20, 15, 10, 5, 0, -5, -10, -15, -20], stretch: 1.02, lift: 0, under: '#d86a2a',
      lead: [[20.2, -16.4], [20.2, -12.4], [20.2, -9.5], [20.2, -6.7], [20.4, -5], [20.6, -3.2], [21, -1.7]],
    },
    rows: [
      '0.020132 0.016466 3.9280e+001 2.6008e-002 9.4035e-002 3.6186e-002 6.8952e+001 1.0076e-001 -1.2964e-003 2.277',
      '0.020042 0.012564 3.2084e+001 2.3655e-002 1.0047e-001 7.4230e-003 9.4225e+001 1.0074e-001 1.9200e-003 1.411',
      '0.019972 0.009557 2.5572e+001 2.2141e-002 8.7706e-002 5.0136e-002 6.0246e+001 1.0102e-001 2.2310e-003 1.625',
      '0.020225 0.007011 1.9120e+001 2.1406e-002 5.5097e-002 8.3890e-002 1.4670e+002 1.0037e-001 -1.7029e-003 1.310',
      '0.020426 0.005006 1.3770e+001 2.1031e-002 9.3353e-002 3.6767e-002 6.8503e+001 1.0033e-001 -1.7226e-003 1.218',
    ],
  },
  {
    id: 4, fields: ['4', '19', 'Charging', 'CC'], pick: '2', color: '#f0962c',
    trend: { seed: 424242, count: 480, max: 500, step: 100, unit: 'Capacity [%]', line: '#f25a26', dot: '#b8482a' },
    cole: {
      left: 83, x: [-0.5, 69.5], y: [-13.2, 30.2], labels: [25, 20, 15, 10, 5, 0, -5, -10], stretch: 1.02, lift: 0.5, under: '#e0762c',
      lead: [[19.7, -8.6], [19.7, -6.1], [19.8, -4.3], [20, -2.9], [20.2, -1.8], [20.6, -1]],
    },
    rows: [
      '0.019615 0.008726 2.3983e+001 2.1468e-002 9.3500e-002 3.7657e-002 6.8063e+001 1.0080e-001 -1.5069e-003 1.553',
      '0.019572 0.006468 1.8288e+001 2.0613e-002 1.0050e-001 8.4710e-003 9.4818e+001 1.0086e-001 1.9128e-003 8.143',
      '0.019687 0.004744 1.3550e+001 2.0250e-002 8.7720e-002 4.9196e-002 6.0715e+001 1.0057e-001 1.9600e-003 5.535',
      '0.019841 0.003188 9.1289e+000 2.0096e-002 5.5491e-002 8.3775e-002 1.4648e+002 1.0049e-001 -1.3674e-003 1.485',
      '0.020127 0.001952 5.5399e+000 2.0221e-002 9.3079e-002 3.7032e-002 6.8305e+001 1.0017e-001 -1.8015e-003 9.263',
    ],
  },
];

const SCHEDULE: [string, string[]][] = [
  ['임피던스 채널', ['채널 #1', '채널 #2', '채널 #3', '채널 #4']],
  ['충/방전기 채널', ['1 - 1', '1 - 2', '1 - 3', '1 - 4']],
  ['충,방전 스케쥴', ['6877875f-23', 'ca880e4a-c2', '7f28dd21-55', '265108ed-21']],
  ['충,방전 사이클', ['4', '4', '4', '4']],
  ['충,방전 스텝', ['15', '7', '17', '19']],
  ['충,방전 형식', ['DisCharging', 'DisCharging', 'Charging', 'Charging']],
  ['충,방전 모드', ['CC', 'CP', 'CC/CV', 'CC']],
  ['종료 조건', ['Voltage', 'Time', 'Current', 'Time']],
  ['종료 조건 값', ['6.8e-001', '3.8e+000', '5.8e-001', '5.7e+000']],
  ['기록 조건', ['Time', 'Time', 'Current', 'Current']],
  ['기록 조건 값', ['2.2e+000', '1.2e+000', '8.9e+000', '6.7e+000']],
];

/* ---------- parts ---------- */

function VerticalScroll({ thumb, rest }: { thumb: number; rest: number }) {
  return (
    <Scroll>
      <ScrollButton aria-label="위로"><Arrow to="up" /></ScrollButton>
      <Thumb $grow={thumb} />
      <Track $grow={rest} />
      <ScrollButton aria-label="아래로"><Arrow to="down" /></ScrollButton>
    </Scroll>
  );
}

function FormRow({ id, label, value }: { id: string; label: string; value: string }) {
  return (
    <>
      <FormLabel htmlFor={id}>{label}</FormLabel>
      <FieldSlot><TextField id={id} defaultValue={value} /></FieldSlot>
    </>
  );
}

function Recipe({ n, channels = [] }: { n: number; channels?: string[] }) {
  return (
    <RecipeCell>
      <PushButton>레시피 #{n} {n === 1 ? <PinIcon c="#4aa3dc" d="#2a74a8" /> : <PinIcon c="#f0604a" d="#b83c2c" />}</PushButton>
      <PushButton aria-label={`레시피 #${n} 편집`}><DocPencilIcon /></PushButton>
      <ListBox>{channels.map(c => <Channel key={c}><CardIcon />{c}</Channel>)}</ListBox>
    </RecipeCell>
  );
}

function GroupEditor() {
  return (
    <Frame>
      <TabStrip><Tab><GearPencilIcon /><DarkLabel>측정 그룹 편집</DarkLabel></Tab></TabStrip>
      <TabBody $pad="11px 11px 9px 9px">
        <GroupRow>
          <Group $pad="3px 7px 6px 8px">
            <legend>채널리스트</legend>
            <ListBox />
            <ResetButton><ResetIcon />리셋</ResetButton>
          </Group>
          <Group $pad="3px 6px 6px 8px">
            <legend>측정 레시피 리스트</legend>
            <RecipeGrid>
              <Recipe n={1} channels={['CH1', 'CH2', 'CH3', 'CH4']} />
              <Recipe n={2} />
              <Recipe n={3} />
              <Recipe n={4} />
            </RecipeGrid>
          </Group>
        </GroupRow>
        <Group $pad="2px 4px 5px 10px">
          <legend>측정 파라미터</legend>
          <ParamPane>
            <FormView>
              <FormGroup><FormRow id="recipe" label="Recipe name" value="C05S08" /></FormGroup>
              <Rule />
              <FormGroup>
                <FormLabel as="span" $tall>Measure Mode</FormLabel>
                <FieldSlot>
                  <RadioLine><Radio type="radio" name="mode" defaultChecked />Sweep</RadioLine>
                  <RadioLine><Radio type="radio" name="mode" />MultiTone</RadioLine>
                </FieldSlot>
                <FormLabel htmlFor="refout">Reference output</FormLabel>
                <FieldSlot>
                  <SelectBox>
                    <select id="refout"><option>Current</option></select>
                    <ArrowCap><Arrow to="down" /></ArrowCap>
                  </SelectBox>
                </FieldSlot>
                <FormRow id="offset" label="Offset" value="0" />
                <FormRow id="amp" label="Amplitude" value="0.1" />
              </FormGroup>
              <Rule />
              <FormGroup>
                <FormRow id="phase" label="Phase" value="0" />
                <FormRow id="period" label="Period" value="0" />
                <FormRow id="repeat" label="Repeat count" value="1" />
                <FormRow id="wave" label="Wave repetition" value="1" />
              </FormGroup>
            </FormView>
            <VerticalScroll thumb={100} rest={200} />
          </ParamPane>
        </Group>
      </TabBody>
    </Frame>
  );
}

function Schedule() {
  return (
    <Frame>
      <TabStrip><Tab><ClipboardIcon /><DarkLabel>충,방전 스케쥴</DarkLabel></Tab></TabStrip>
      <TabBody $pad="9px 11px 9px 15px">
        <ScheduleGrid>
          {SCHEDULE.map(([name, values], r) => (
            <React.Fragment key={name}>
              <ScheduleLabel>{name}</ScheduleLabel>
              {values.map((v, c) => (
                <ScheduleField
                  key={c}
                  readOnly
                  aria-label={`${name} ${c + 1}`}
                  value={v}
                  $size={r === 0 ? 15 : 14}
                  $bg={r === 0 ? '#fafdc8' : r === 1 ? '#7fffd4' : undefined}
                  $align={r < 2 ? 'center' : r === 2 ? 'left' : 'right'}
                />
              ))}
            </React.Fragment>
          ))}
        </ScheduleGrid>
      </TabBody>
    </Frame>
  );
}

const FIELD_WIDTHS = [53, 53, 93, 67];

function Quadrant({ cell }: { cell: Cell }) {
  return (
    <Quad>
      <Banner>
        <BannerCell>임피던스 채널</BannerCell>
        <BannerCell $kind="value">{cell.id}</BannerCell>
        <BannerCell>충,방전기 채널</BannerCell>
        <BannerCell $kind="value">1 - {cell.id}</BannerCell>
        <BannerCell>측정그룹 (레시피)</BannerCell>
        <BannerCell $kind="value">1</BannerCell>
        <BannerCell $kind="time">00:02:33.2</BannerCell>
        <BannerCell>동작 상태</BannerCell>
        <BannerCell $kind="value">신호 대기</BannerCell>
      </Banner>
      <GraphRow>
        <Frame>
          <TabStrip>
            <Tab $kind="tools">
              <AreaIcon />
              <TabText>채널 충,방전 그래프</TabText>
              {cell.fields.map((f, i) => (
                <GreenField key={i} readOnly aria-label={`상태 ${i + 1}`} value={f} $w={FIELD_WIDTHS[i]} $bg="#adff2f" />
              ))}
            </Tab>
          </TabStrip>
          <TabBody $pad="0"><TrendChart {...cell.trend} /></TabBody>
        </Frame>
        <Frame>
          <TabStrip>
            <Tab $kind="tools">
              <LineIcon />
              <TabText $size={15}>Cole-Cole 플롯</TabText>
              <Combo>
                <label><Check type="checkbox" defaultChecked />{cell.pick}</label>
                <Swatch $c={cell.color} />
                <ComboArrow aria-label="채널 선택"><Arrow to="down" /></ComboArrow>
              </Combo>
              <BroomButton aria-label="지우기"><BroomIcon /></BroomButton>
              <Progress role="progressbar" aria-valuenow={51} aria-valuemax={51} />
              <Small>51 / 51</Small>
            </Tab>
          </TabStrip>
          <TabBody $pad="0"><ColeChart {...cell.cole} /></TabBody>
        </Frame>
      </GraphRow>
      <Frame>
        <TabStrip><Tab $kind="small"><LinkTableIcon /><TabText>임피던스 측정 데이타</TabText></Tab></TabStrip>
        <TabBody $pad="6px 3px 5px 5px">
          <SheetFrame>
            <SheetClip>
              <Sheet>
                <colgroup>
                  {WIDTHS.map((w, i) => <col key={i} width={w} />)}
                  <col />
                </colgroup>
                <thead><tr>{HEADS.map(h => <th key={h} scope="col">{h}</th>)}</tr></thead>
                <tbody>
                  {cell.rows.map((row, r) => (
                    <tr key={r}>{[FREQS[r], ...row.split(' ')].map((v, i) => <td key={i}>{v}</td>)}</tr>
                  ))}
                </tbody>
              </Sheet>
            </SheetClip>
            <VerticalScroll thumb={10} rest={77} />
            <Scroll $row>
              <ScrollButton aria-label="왼쪽"><Arrow to="left" /></ScrollButton>
              <Thumb $grow={729} />
              <Track $grow={199} />
              <ScrollButton aria-label="오른쪽"><Arrow to="right" /></ScrollButton>
            </Scroll>
            <Corner />
          </SheetFrame>
        </TabBody>
      </Frame>
    </Quad>
  );
}

export default function App() {
  return (
    <Desktop>
      <Global />
      <ViewerWindow>
        <ViewerBar>
          <CaptionButton aria-label="최소화"><CaptionMark d="M3 11h6" /></CaptionButton>
          <CaptionButton aria-label="최대화"><CaptionMark d="M2 3h10M2 2v10h10V2" /></CaptionButton>
          <CaptionButton $apart aria-label="닫기"><CaptionMark d="M3 3l8 8M11 3l-8 8" /></CaptionButton>
        </ViewerBar>
        <MenuBand />
        <ViewerGrid>
          <ViewerPane>
            <PropertiesChart />
            <PaneButton aria-label="위로">
              <svg viewBox="0 0 18 18" aria-hidden="true"><path d="M9 2l7 7-2 2-3-2v6H7V9l-3 2-2-2z" fill="#111" /></svg>
            </PaneButton>
          </ViewerPane>
          <ViewerPane><FrequencyChart /></ViewerPane>
        </ViewerGrid>
      </ViewerWindow>

      <MainWindow>
        <TitleBar>
          <LogoIcon />
          <Title>삼성SDI - YOKOGAWA 이차전지 임피던스 측정기</Title>
          <CaptionButton aria-label="최소화"><CaptionMark d="M3 11h6" /></CaptionButton>
          <CaptionButton aria-label="이전 크기로"><CaptionMark d="M5 5V2h7v6H9M2 6h7v6H2zM2 7h7M5 3h7" w={1} /></CaptionButton>
          <CaptionButton $apart aria-label="닫기"><CaptionMark d="M3 3l8 8M11 3l-8 8" /></CaptionButton>
        </TitleBar>
        <Toolbar>
          <Strip>
            <Grip />
            <ToolButton><ChainIcon />채널맵</ToolButton>
            <ToolButton><DocPencilIcon />레시피</ToolButton>
            <ToolButton><GearsIcon />시스템</ToolButton>
            <ToolButton><WoodIcon />Z 뷰어</ToolButton>
            <Overflow aria-label="더 보기"><MoreMark /></Overflow>
          </Strip>
          <Strip>
            <Grip />
            <ToolButton><BlueIcon />시스템 정지</ToolButton>
            <Elapsed>00:18:58.9</Elapsed>
            <Overflow aria-label="더 보기"><MoreMark /></Overflow>
          </Strip>
          <Strip>
            <Grip />
            <Counter><AlertIcon c="#2c9ccb" d="#1d7399" /><CounterBox readOnly aria-label="정보" value="424" /></Counter>
            <Counter><AlertIcon c="#cfcf3a" d="#a3a32a" /><CounterBox readOnly aria-label="경고" value="2" /></Counter>
            <Counter><AlertIcon c="#d83a4c" d="#a82434" /><ActiveBox aria-label="오류"><mark>2</mark></ActiveBox></Counter>
            <Overflow aria-label="더 보기"><MoreMark /></Overflow>
          </Strip>
        </Toolbar>
        <Workspace>
          <Column>
            <GroupEditor />
            <Schedule />
          </Column>
          <Frame>
            <TabStrip>
              <Tab><NotesIcon /><DarkLabel>측정 데이타</DarkLabel></Tab>
              <Tab $kind="rear"><LogIcon /><DarkLabel>로그 데이타</DarkLabel></Tab>
            </TabStrip>
            <TabBody $pad="7px 7px 6px 6px">
              <QuadGrid>{CELLS.map(c => <Quadrant key={c.id} cell={c} />)}</QuadGrid>
            </TabBody>
          </Frame>
        </Workspace>
        <StatusBar />
      </MainWindow>
    </Desktop>
  );
}
